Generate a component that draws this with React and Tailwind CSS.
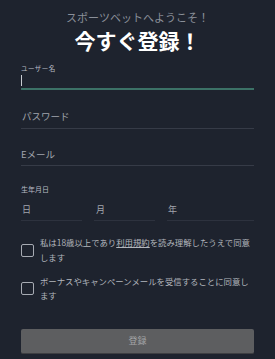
export default function App() {
  const font = { fontFamily: '"Noto Sans CJK JP", "Noto Sans", sans-serif' };
  return (
    <div className="w-[275px] h-[359px] bg-[#1e232e] overflow-hidden" style={font}>
      <div className="px-[21px] pt-[9px] flex flex-col">
        <p className="text-center text-[11px] leading-[16px] text-[#8a8f99]">スポーツベットへようこそ！</p>
        <h1 className="text-center text-[21px] leading-[26px] font-bold text-white mt-[2px]">今すぐ登録！</h1>

        <label className="text-[6.5px] leading-[8px] tracking-[0.5px] text-[#b8bcc4] mt-[11px]">ユーザー名</label>
        <div className="h-[18px] border-b-2 border-[#3c7166] flex items-center">
          <span className="w-px h-[11px] bg-[#c9ccd2]"></span>
        </div>

        <div className="h-[39px] border-b border-[#363b47] flex items-end pb-[5px] pl-px">
          <span className="text-[9.5px] leading-[13px] text-[#a1a5ad]">パスワード</span>
        </div>
        <div className="h-[37px] border-b border-[#363b47] flex items-end pb-[4px]">
          <span className="text-[9.5px] leading-[13px] text-[#a1a5ad]">Eメール</span>
        </div>

        <label className="text-[7px] leading-[10px] text-[#b8bcc4] mt-[18px]">生年月日</label>
        <div className="flex gap-[12px]">
          <div className="w-[61px] h-[27px] border-b border-[#2d323e] flex items-end pb-[4px] pl-px">
            <span className="text-[9px] leading-[13px] text-[#a1a5ad]">日</span>
          </div>
          <div className="w-[61px] h-[27px] border-b border-[#2d323e] flex items-end pb-[4px] pl-[2px]">
            <span className="text-[9px] leading-[13px] text-[#a1a5ad]">月</span>
          </div>
          <div className="flex-1 h-[27px] border-b border-[#2d323e] flex items-end pb-[4px] pl-px">
            <span className="text-[9px] leading-[13px] text-[#a1a5ad]">年</span>
          </div>
        </div>

        <div className="flex items-center gap-[6px] mt-[14px]">
          <span className="w-[13px] h-[13px] shrink-0 rounded-[2px] border border-[#a7abb3]"></span>
          <p className="text-[8.4px] leading-[15px] text-[#b2b6bd]">
            私は18歳以上であり<span className="underline">利用規約</span>を読み理解したうえで同意します
          </p>
        </div>
        <div className="flex items-center gap-[6px] mt-[9px]">
          <span className="w-[13px] h-[13px] shrink-0 rounded-[2px] border border-[#a7abb3]"></span>
          <p className="text-[8.4px] leading-[14px] text-[#b2b6bd]">
            ボーナスやキャンペーンメールを受信することに同意します
          </p>
        </div>

        <button className="mt-[27px] h-[25px] w-full rounded-[2px] bg-[#5d5e60] border-b border-[#3e3f42] text-[9px] text-[#a3a4a6]">
          登録
        </button>
      </div>
    </div>
  );
}
